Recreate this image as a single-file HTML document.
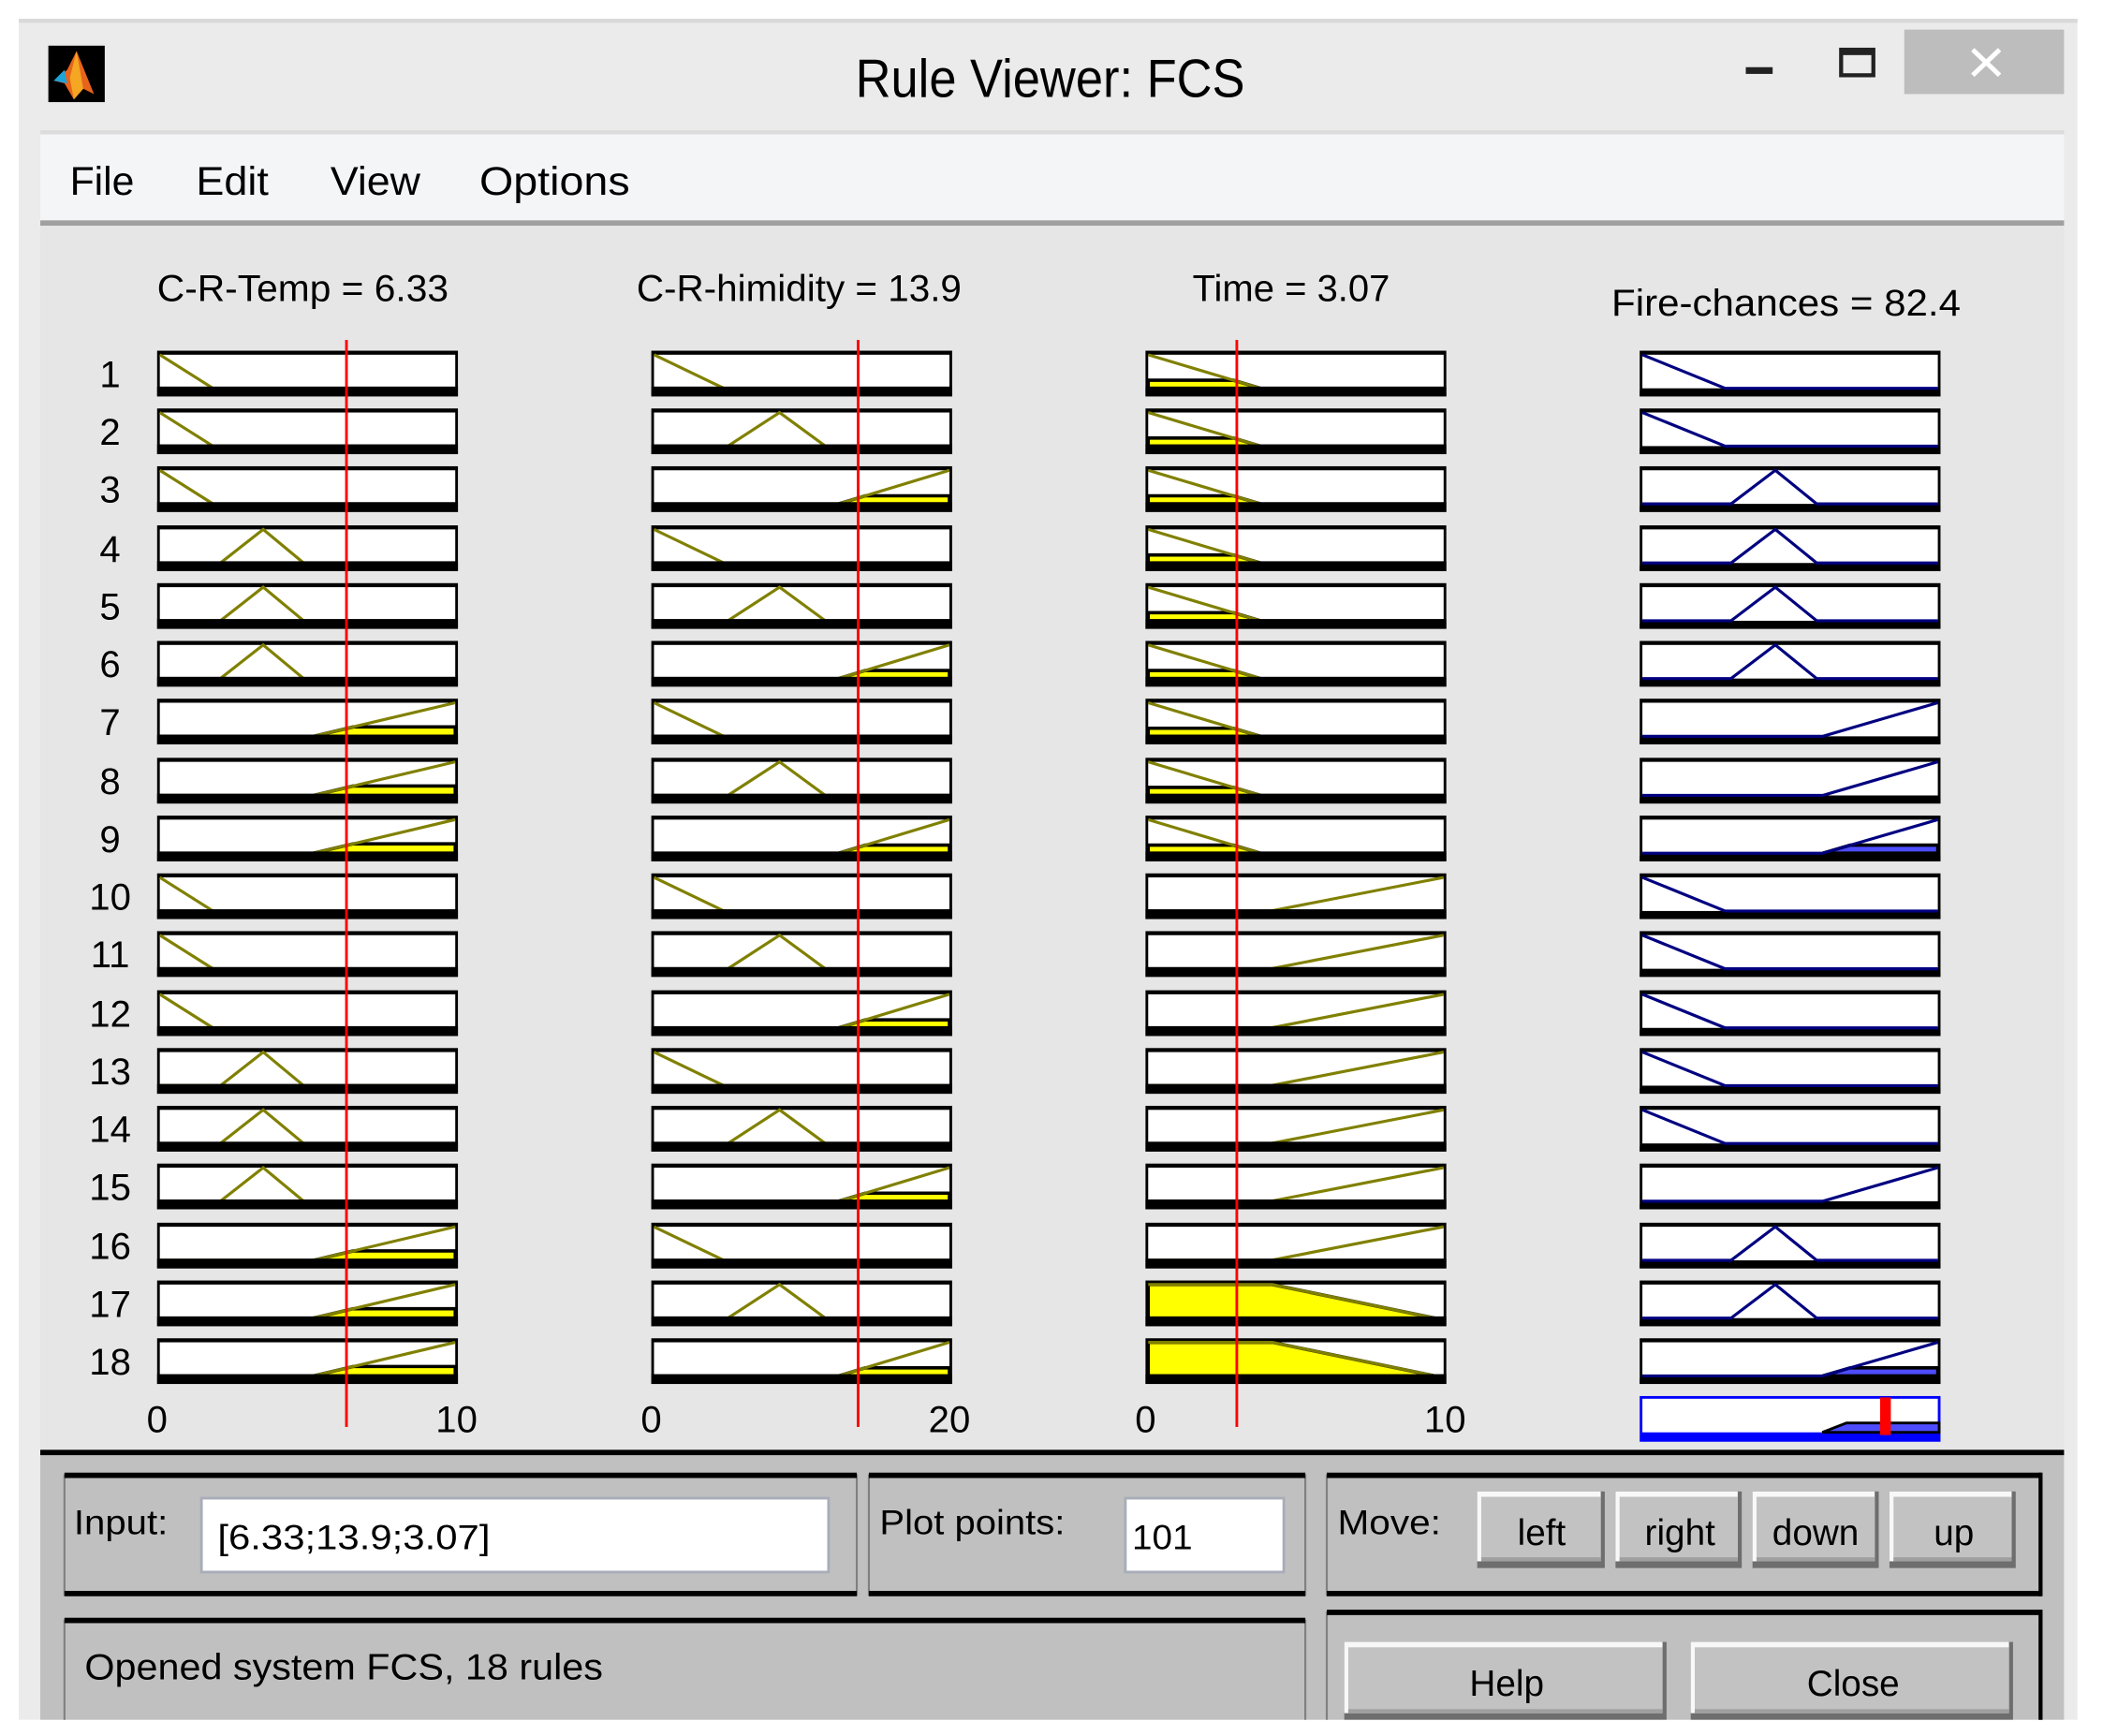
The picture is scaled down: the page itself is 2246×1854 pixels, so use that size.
<!DOCTYPE html>
<html><head><meta charset="utf-8"><style>
html,body{margin:0;padding:0;background:#fff;width:2246px;height:1854px;overflow:hidden}
svg{display:block}
text{font-family:"Liberation Sans",sans-serif;fill:#000}
</style></head><body>
<svg id="s" width="2246" height="1854" viewBox="0 0 1566 1292" preserveAspectRatio="none" xmlns="http://www.w3.org/2000/svg">
<rect x="0" y="0" width="1569" height="1295" fill="#fff"/>
<rect x="14" y="14" width="1533" height="1266" fill="#ebebeb"/>
<rect x="14" y="14" width="1533" height="3" fill="#d9d9d9"/>
<rect x="36" y="34" width="42" height="42" fill="#000"/>
<polygon points="57,38 70,70 62,66 55,74 48,62 40,60 50,52" fill="#e8641c"/>
<polygon points="57,38 62,66 55,74 52,58" fill="#f5a623"/>
<polygon points="40,60 48,52 50,62" fill="#1ea3d8"/>
<text x="782" y="72" font-size="40" text-anchor="middle" textLength="290" lengthAdjust="spacingAndGlyphs" fill="#222">Rule Viewer: FCS</text>
<rect x="1300" y="50" width="20" height="5" fill="#222"/>
<rect x="1371" y="37" width="24" height="19" fill="none" stroke="#222" stroke-width="3"/>
<rect x="1371" y="36" width="24" height="5" fill="#222"/>
<rect x="1418" y="22" width="119" height="48" fill="#bdbdbd"/>
<path d="M1469 37 L1489 56 M1489 37 L1469 56" stroke="#fff" stroke-width="3.5"/>
<rect x="30" y="97" width="1507" height="3" fill="#dcdcdc"/>
<rect x="30" y="100" width="1507" height="65" fill="#f4f5f7"/>
<rect x="30" y="164" width="1507" height="4" fill="#a0a0a0"/>
<text x="52" y="145" font-size="30" textLength="48" lengthAdjust="spacingAndGlyphs">File</text>
<text x="146" y="145" font-size="30" textLength="54" lengthAdjust="spacingAndGlyphs">Edit</text>
<text x="246" y="145" font-size="30" textLength="67" lengthAdjust="spacingAndGlyphs">View</text>
<text x="357" y="145" font-size="30" textLength="112" lengthAdjust="spacingAndGlyphs">Options</text>
<rect x="30" y="168" width="1507" height="912" fill="#e6e6e6"/>
<text x="117" y="224" font-size="28" textLength="217" lengthAdjust="spacingAndGlyphs">C-R-Temp = 6.33</text>
<text x="474" y="224" font-size="28" textLength="242" lengthAdjust="spacingAndGlyphs">C-R-himidity = 13.9</text>
<text x="888" y="224" font-size="28" textLength="147" lengthAdjust="spacingAndGlyphs">Time = 3.07</text>
<text x="1200" y="235" font-size="28" textLength="260" lengthAdjust="spacingAndGlyphs">Fire-chances = 82.4</text>
<g id="plots"></g>
<g font-size="28" text-anchor="middle">
<text x="82" y="288">1</text><text x="82" y="331">2</text><text x="82" y="374">3</text><text x="82" y="418">4</text><text x="82" y="461">5</text><text x="82" y="504">6</text><text x="82" y="547">7</text><text x="82" y="591">8</text><text x="82" y="634">9</text><text x="82" y="677">10</text><text x="82" y="720">11</text><text x="82" y="764">12</text><text x="82" y="807">13</text><text x="82" y="850">14</text><text x="82" y="893">15</text><text x="82" y="937">16</text><text x="82" y="980">17</text><text x="82" y="1023">18</text>
<text x="117" y="1066">0</text><text x="340" y="1066">10</text><text x="485" y="1066">0</text><text x="707" y="1066">20</text><text x="853" y="1066">0</text><text x="1076" y="1066">10</text>
</g>
<rect x="1222" y="1040" width="222" height="32" fill="#fff" stroke="#0000ff" stroke-width="2"/>
<rect x="1222" y="1066" width="222" height="6" fill="#0000ff"/>
<polygon points="1357,1066 1375,1059 1444,1059 1444,1066" fill="#4d4dff" stroke="#000" stroke-width="2"/>
<rect x="1400" y="1040" width="8" height="28" fill="#ff0000"/>
<rect x="30" y="1080" width="1507" height="200" fill="#c0c0c0"/>
<rect x="30" y="1079" width="1507" height="4" fill="#000"/>
<g fill="none">
<rect x="48" y="1098" width="590" height="89" stroke="#808080" stroke-width="1.5"/>
<rect x="647" y="1098" width="325" height="89" stroke="#808080" stroke-width="1.5"/>
<rect x="988" y="1098" width="532" height="89" stroke="#808080" stroke-width="1.5"/>
<rect x="48" y="1206" width="924" height="90" stroke="#808080" stroke-width="1.5"/>
<rect x="988" y="1200" width="532" height="96" stroke="#808080" stroke-width="1.5"/>
</g>
<g fill="#000">
<rect x="48" y="1096" width="590" height="4"/><rect x="48" y="1184" width="590" height="4"/>
<rect x="647" y="1096" width="325" height="4"/><rect x="647" y="1184" width="325" height="4"/>
<rect x="988" y="1096" width="532" height="4"/><rect x="988" y="1184" width="532" height="4"/><rect x="1518" y="1096" width="3" height="92"/>
<rect x="48" y="1204" width="924" height="4"/><rect x="988" y="1198" width="532" height="4"/><rect x="1518" y="1198" width="3" height="90"/>
</g>
<rect x="150" y="1115" width="467" height="55" fill="#fff" stroke="#a8adb8" stroke-width="2"/>
<rect x="838" y="1115" width="118" height="55" fill="#fff" stroke="#a8adb8" stroke-width="2"/>
<text x="55" y="1142" font-size="26" textLength="70" lengthAdjust="spacingAndGlyphs">Input:</text>
<text x="162" y="1153" font-size="26" textLength="203" lengthAdjust="spacingAndGlyphs">[6.33;13.9;3.07]</text>
<text x="655" y="1142" font-size="26" textLength="138" lengthAdjust="spacingAndGlyphs">Plot points:</text>
<text x="843" y="1153" font-size="26" textLength="45" lengthAdjust="spacingAndGlyphs">101</text>
<text x="996" y="1142" font-size="26" textLength="77" lengthAdjust="spacingAndGlyphs">Move:</text>
<g id="btns"></g>
<g font-size="27" text-anchor="middle">
<text x="1148" y="1150">left</text><text x="1251" y="1150">right</text><text x="1352" y="1150">down</text><text x="1455" y="1150">up</text>
<text x="1122" y="1262">Help</text><text x="1380" y="1262">Close</text>
</g>
<text x="63" y="1250" font-size="27" textLength="386" lengthAdjust="spacingAndGlyphs">Opened system FCS, 18 rules</text>
<rect x="0" y="1280" width="1569" height="15" fill="#fff"/>
</svg>
<script>
(function(){
var g=document.getElementById('plots'),h='';
var cols=[117,485,853,1221];
var T={low:[[0,1],[0.18,0],[1,0]],med:[[0,0],[0.205,0],[0.35,1],[0.487,0],[1,0]],high:[[0,0],[0.52,0],[1,1]]};
var H={low:[[0,1],[0.237,0],[1,0]],med:[[0,0],[0.25,0],[0.425,1],[0.58,0],[1,0]],high:[[0,0],[0.625,0],[1,1]]};
var M={low:[[0,1],[0.38,0],[1,0]],high:[[0,0],[0.415,0],[1,1]],trap:[[0,1],[0.42,1],[0.97,0],[1,0]]};
var O={low:[[0,1],[0.28,0],[1,0]],med:[[0,0],[0.3,0],[0.45,1],[0.59,0],[1,0]],high:[[0,0],[0.61,0],[1,1]]};
var c1=['low','low','low','med','med','med','high','high','high','low','low','low','med','med','med','high','high','high'];
var c2=['low','med','high'];
var c3=function(i){return i<9?'low':(i<16?'high':'trap');};
var c4=['low','low','med','med','med','med','high','high','high','low','low','low','low','low','high','med','med','high'];
function box(x0,y,mf,col,fill,fcol){
  var px=function(f){return (x0+2+f*220).toFixed(1)},py=function(m){return (y+28-m*25).toFixed(1)};
  h+='<rect x="'+x0+'" y="'+y+'" width="224" height="34" fill="#000"/>';
  h+='<rect x="'+(x0+2)+'" y="'+(y+3)+'" width="220" height="25" fill="#fff"/>';
  if(fill){h+='<polygon points="'+fill.map(function(p){return px(p[0])+','+py(p[1])}).join(' ')+'" fill="'+fcol+'" stroke="#000" stroke-width="2.5"/>';}
  h+='<polyline points="'+mf.map(function(p){return px(p[0])+','+py(p[1])}).join(' ')+'" fill="none" stroke="'+col+'" stroke-width="2.2"/>';
  if(col!='#000080'){h+='<rect x="'+x0+'" y="'+(y+26.7)+'" width="224" height="7.3" fill="#000"/>';}
  else{h+='<rect x="'+x0+'" y="'+(y+30)+'" width="224" height="4" fill="#000"/>';}
}
for(var i=0;i<18;i++){
  var y=Math.round(261+i*43.24);
  var f1=null,f2=null,f3=null,f4=null,lv=0.28;
  if(c1[i]=='high'){f1=[[0.52,-0.1],[0.52,0],[0.52+lv*0.48,lv],[1,lv],[1,-0.1]];}
  var k2=c2[i%3]; if(k2=='high'){var l2=0.24;f2=[[0.625,-0.1],[0.625,0],[0.625+l2*0.375,l2],[1,l2],[1,-0.1]];}
  var k3=c3(i); if(k3=='low'){var l3=0.24;f3=[[0,-0.1],[0,l3],[0.38*(1-l3),l3],[0.38,0],[0.38,-0.1]];} else if(k3=='trap'){f3=[[0,-0.1],[0,1],[0.42,1],[0.97,0],[0.97,-0.1]];}
  if(i==8||i==17){var l4=0.24;f4=[[0.61,0],[0.61+l4*0.39,l4],[1,l4],[1,0]];}
  box(cols[0],y,T[c1[i]],'#808000',f1,'#ffff00');
  box(cols[1],y,H[k2],'#808000',f2,'#ffff00');
  box(cols[2],y,M[k3],'#808000',f3,'#ffff00');
  box(cols[3],y,O[c4[i]],'#000080',f4,'#4d4dff');
}
[258,639,921].forEach(function(x){h+='<rect x="'+(x-1)+'" y="253" width="2" height="809" fill="#ff0000"/>';});
g.innerHTML=h;
var b='',B=[[1100,1110,95,57],[1203,1110,94,57],[1305,1110,94,57],[1407,1110,94,57],[1001,1222,240,58],[1259,1222,240,58]];
B.forEach(function(r){var x=r[0],y=r[1],w=r[2],hh=r[3];
 b+='<rect x="'+x+'" y="'+y+'" width="'+w+'" height="'+hh+'" fill="#6e6e6e"/>';
 b+='<rect x="'+x+'" y="'+y+'" width="'+(w-3)+'" height="'+(hh-5)+'" fill="#f8f8f8"/>';
 b+='<rect x="'+(x+3)+'" y="'+(y+4)+'" width="'+(w-6)+'" height="'+(hh-9)+'" fill="#c2c2c2"/>';
 b+='<rect x="'+(x+3)+'" y="'+(y+hh-8)+'" width="'+(w-6)+'" height="3" fill="#a0a0a0"/>';});
document.getElementById('btns').innerHTML=b;
})();
</script>
</body></html>
